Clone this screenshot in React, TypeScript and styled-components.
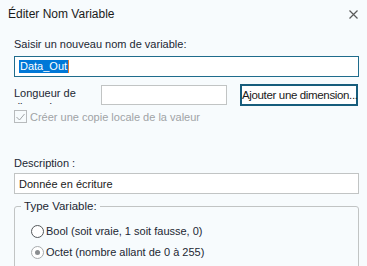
import React from 'react'
import styled, { createGlobalStyle } from 'styled-components'

const Global = createGlobalStyle`
  html, body {
    margin: 0;
    padding: 0;
    background: #f7fbfd;
  }
  body {
    font-family: 'Liberation Sans', Arial, sans-serif;
  }
`

const Window = styled.div`
  width: 367px;
  height: 266px;
  overflow: hidden;
  background: #f7fbfd;
  color: #1c2733;
  font-size: 11px;
`

const TitleBar = styled.div`
  display: flex;
  align-items: center;
  justify-content: space-between;
  height: 28px;
  padding: 0 9px 0 8px;
`

const Title = styled.span`
  font-size: 12px;
  color: #1a1a1a;
`

const Body = styled.div`
  display: flex;
  flex-direction: column;
  padding: 0 8px 0 14px;
`

const Label = styled.div<{ $top: number }>`
  margin-top: ${p => p.$top}px;
  line-height: 14px;
  height: 14px;
`

const TextBox = styled.div<{ $focused?: boolean; $top: number }>`
  box-sizing: border-box;
  height: 21px;
  margin-top: ${p => p.$top}px;
  background: #fff;
  border: 1px solid ${p => (p.$focused ? '#1f6c8c' : '#c1c4c4')};
  display: flex;
  align-items: center;
  padding-left: 4px;
  color: #1a1a1a;
`

const Selected = styled.span`
  background: #0078d7;
  color: #fff;
  line-height: 13px;
  padding: 0 1px;
  border-right: 1px solid #e07a2e;
`

const Row = styled.div`
  display: flex;
  align-items: center;
  margin-top: 7px;
  height: 21px;
`

const RowLabel = styled.div`
  width: 87px;
  height: 20px;
  overflow: hidden;
  line-height: 14px;
  padding-top: 2px;
  box-sizing: border-box;
  align-self: flex-start;
`

const SmallBox = styled.div`
  box-sizing: border-box;
  width: 126px;
  height: 20px;
  background: #fff;
  border: 1px solid #c1c4c4;
`

const Button = styled.button`
  box-sizing: border-box;
  margin-left: 13px;
  width: 118px;
  height: 22px;
  background: #fff;
  border: 2px solid #175d7c;
  font-family: 'Liberation Sans', Arial, sans-serif;
  font-size: 11.5px;
  letter-spacing: -0.35px;
  color: #1a1a1a;
  padding: 0;
  white-space: nowrap;
`

const CheckRow = styled.div`
  display: flex;
  align-items: center;
  gap: 3px;
  margin-top: 5px;
  height: 13px;
  color: #a0a3a6;
`

const CheckBox = styled.span`
  box-sizing: border-box;
  width: 13px;
  height: 13px;
  border: 1px solid #b8bbbd;
  display: flex;
  align-items: center;
  justify-content: center;
`

const Group = styled.fieldset`
  margin: 5px 0 0;
  padding: 11px 0 0 0;
  border: 1px solid #c1c4c4;
  border-radius: 3px;
  height: 90px;
  box-sizing: border-box;
  min-width: 0;
`

const Legend = styled.legend`
  padding: 0 3px;
  margin-left: 6px;
  line-height: 14px;
  font-size: 11.5px;
`

const RadioRow = styled.label`
  display: flex;
  align-items: center;
  gap: 2px;
  height: 14px;
  margin: 0 0 7px 16px;
`

const Radio = styled.span<{ $checked?: boolean }>`
  box-sizing: border-box;
  width: 13px;
  height: 13px;
  border-radius: 50%;
  border: 1px solid ${p => (p.$checked ? '#a8abad' : '#55595c')};
  background: #fff;
  display: flex;
  align-items: center;
  justify-content: center;
  &::after {
    content: '';
    display: ${p => (p.$checked ? 'block' : 'none')};
    width: 5px;
    height: 5px;
    border-radius: 50%;
    background: #8a8d90;
  }
`

export default function App() {
  return (
    <Window>
      <Global />
      <TitleBar>
        <Title>Éditer Nom Variable</Title>
        <svg width="9" height="9" viewBox="0 0 9 9">
          <path d="M0.5 0.5 L8.5 8.5 M8.5 0.5 L0.5 8.5" stroke="#5a5a5a" strokeWidth="1.2" />
        </svg>
      </TitleBar>
      <Body>
        <Label $top={9}>Saisir un nouveau nom de variable:</Label>
        <TextBox $focused $top={5}>
          <Selected>Data_Out</Selected>
        </TextBox>
        <Row>
          <RowLabel>Longueur de dimension</RowLabel>
          <SmallBox />
          <Button>Ajouter une dimension...</Button>
        </Row>
        <CheckRow>
          <CheckBox>
            <svg width="9" height="8" viewBox="0 0 9 8">
              <path d="M0.5 4 L3.5 7 L8.5 1" fill="none" stroke="#a0a3a6" strokeWidth="1" />
            </svg>
          </CheckBox>
          Créer une copie locale de la valeur
        </CheckRow>
        <Label $top={33}>Description :</Label>
        <TextBox $top={3}>Donnée en écriture</TextBox>
        <Group>
          <Legend>Type Variable:</Legend>
          <RadioRow>
            <Radio />
            Bool (soit vraie, 1 soit fausse, 0)
          </RadioRow>
          <RadioRow>
            <Radio $checked />
            Octet (nombre allant de 0 à 255)
          </RadioRow>
        </Group>
      </Body>
    </Window>
  )
}
